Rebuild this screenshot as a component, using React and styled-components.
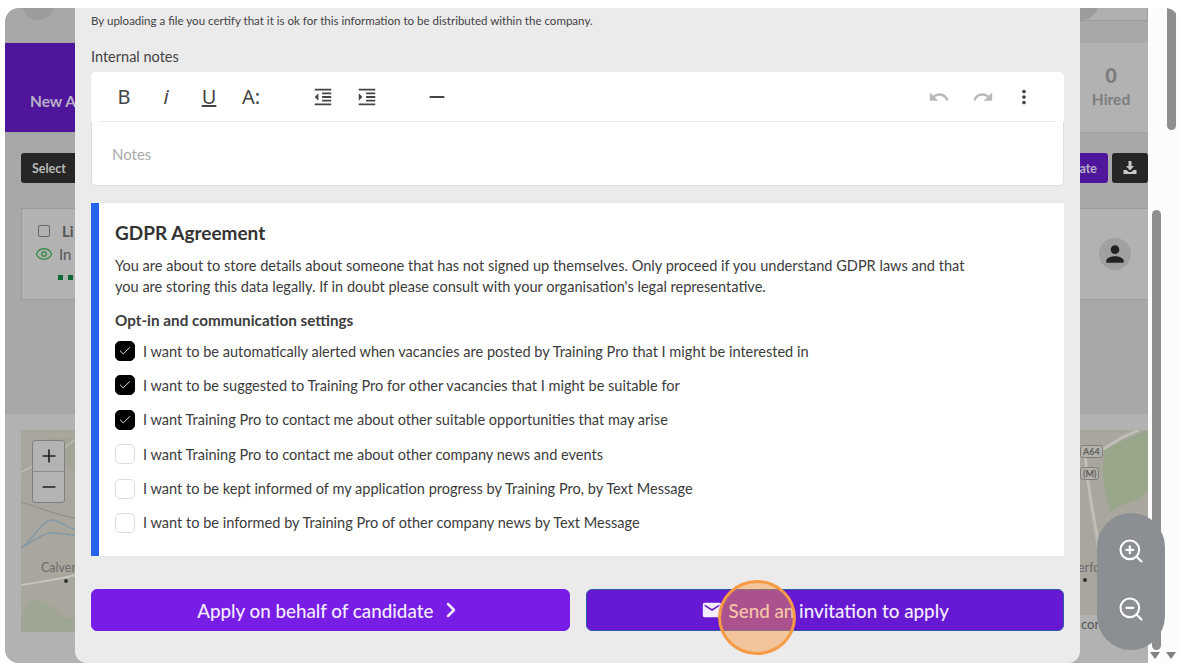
import React from 'react'
import styled, { createGlobalStyle } from 'styled-components'
import { Check, ChevronRight, Eye, Minus, Plus, ZoomIn, ZoomOut } from 'lucide-react'
import { MdEmail, MdFormatIndentDecrease, MdFormatIndentIncrease, MdHorizontalRule, MdMoreVert, MdPerson, MdRedo, MdUndo } from 'react-icons/md'

const GlobalStyle = createGlobalStyle`
  html, body { margin: 0; height: 100%; background: #fff; overflow: hidden; }
  body { font-family: Lato, "Noto Sans", sans-serif; color: #333; }
`

const options = [
  { label: 'I want to be automatically alerted when vacancies are posted by Training Pro that I might be interested in', on: true },
  { label: 'I want to be suggested to Training Pro for other vacancies that I might be suitable for', on: true },
  { label: 'I want Training Pro to contact me about other suitable opportunities that may arise', on: true },
  { label: 'I want Training Pro to contact me about other company news and events', on: false },
  { label: 'I want to be kept informed of my application progress by Training Pro, by Text Message', on: false },
  { label: 'I want to be informed by Training Pro of other company news by Text Message', on: false },
]

const Screen = styled.div`
  height: 672px;
  padding: 8px 14px 9px 5px;
  box-sizing: border-box;
`
const Frame = styled.div`
  position: relative;
  height: 655px;
  display: grid;
  grid-template-columns: 1fr 31px;
  border-radius: 14px;
  overflow: hidden;
`
const Page = styled.div`
  display: flex;
  flex-direction: column;
  background: #a8a8a8;
  min-width: 0;
`
const TopBar = styled.div`
  height: 35px;
  display: flex;
  justify-content: space-between;
  padding: 0 0 0 17px;
  flex: none;
`
const RoundGhost = styled.div`
  width: 32px;
  height: 32px;
  margin-top: -20px;
  border-radius: 50%;
  background: #9c9c9c;
`
const TopBox = styled.div`
  height: 12px;
  width: 130px;
  display: flex;
  justify-content: center;
  background: #b0b0b0;
  border-bottom: 1px solid #9a9a9a;
  border-right: 1px solid #9a9a9a;
  overflow: hidden;
`
const StatsBand = styled.div`
  height: 90px;
  display: flex;
  justify-content: space-between;
  background: #b2b2b2;
  border-bottom: 1px solid #a0a0a0;
  box-sizing: border-box;
  flex: none;
`
const NewTile = styled.div`
  width: 70px;
  background: #4f169b;
  color: #b7b0c6;
  font-weight: 700;
  font-size: 15.5px;
  display: flex;
  align-items: center;
  padding: 27px 0 0 25px;
  box-sizing: border-box;
  white-space: nowrap;
  overflow: hidden;
`
const StatTile = styled.div`
  width: 74px;
  display: flex;
  flex-direction: column;
  align-items: center;
  justify-content: center;
  padding: 0 0 2px 0;
  color: #7d7d7d;
  font-weight: 700;
  font-size: 15.5px;
  line-height: 24px;
  strong { font-size: 20px; }
`
const ActionRow = styled.div`
  height: 75px;
  display: flex;
  align-items: flex-start;
  padding: 20px 0 0 16px;
  gap: 4px;
  box-sizing: border-box;
  flex: none;
`
const DarkButton = styled.div`
  height: 30px;
  width: ${({ $w }) => $w}px;
  background: #262626;
  color: #b9b9b9;
  font-size: 12.5px;
  font-weight: 700;
  border-radius: 3px;
  display: flex;
  align-items: center;
  justify-content: ${({ $start }) => ($start ? 'flex-start' : 'center')};
  padding-left: ${({ $start }) => ($start ? 11 : 0)}px;
  box-sizing: border-box;
  white-space: nowrap;
  overflow: hidden;
`
const PurpleButton = styled(DarkButton)`
  margin-left: auto;
  background: #4f169b;
  color: #b7b0c6;
  justify-content: flex-end;
  padding-right: 11px;
`
const Row = styled.div`
  margin-left: 16px;
  height: 92px;
  flex: none;
  display: flex;
  justify-content: space-between;
  background: #b2b2b2;
  border: 1px solid #9c9c9c;
  border-right: 0;
  box-sizing: border-box;
  padding: 13px 17px 0 13px;
  color: #555;
  font-size: 15px;
`
const RowInfo = styled.div`
  display: flex;
  flex-direction: column;
  gap: 5px;
`
const RowLine = styled.div`
  display: flex;
  align-items: center;
  gap: 6px;
  height: 18px;
`
const SmallCheck = styled.span`
  width: 10px;
  height: 10px;
  border: 1px solid #666;
  border-radius: 2px;
  margin-left: 3px;
  margin-right: 6px;
`
const Dots = styled.div`
  display: flex;
  gap: 5px;
  margin: 7px 0 0 23px;
  span { width: 5px; height: 5px; background: #0c6a35; }
`
const Avatar = styled.div`
  width: 32px;
  height: 32px;
  margin-top: 16px;
  border-radius: 50%;
  background: #a0a0a0;
  color: #222;
  display: flex;
  align-items: center;
  justify-content: center;
`
const Gap = styled.div`
  height: 113px;
  flex: none;
`
const MapSection = styled.div`
  flex: 1;
  background: #b2b2b2;
  border-top: 1px solid #a6a6a6;
  padding: 16px 0 31px 16px;
  display: flex;
  min-height: 0;
`
const MapArea = styled.div`
  position: relative;
  flex: 1;
  background: #a9a69e;
  overflow: hidden;
  svg { display: block; }
`
const MapLabel = styled.span`
  position: absolute;
  left: ${({ $x }) => $x}px;
  top: ${({ $y }) => $y}px;
  font-size: 12.5px;
  line-height: 14px;
  color: #6a6a6a;
`
const RoadShield = styled.span`
  position: absolute;
  left: ${({ $x }) => $x}px;
  top: ${({ $y }) => $y}px;
  padding: 0 2px;
  font-size: 9px;
  line-height: 11px;
  font-weight: 700;
  color: #5e5e5e;
  background: #b3b1aa;
  border: 1px solid #807f7b;
  border-radius: 3px;
`
const MapFooter = styled.span`
  position: absolute;
  right: 0;
  bottom: 0;
  width: 68px;
  height: 17px;
  padding-left: 1px;
  box-sizing: border-box;
  background: #b2b2b2;
  font-size: 13px;
  line-height: 18px;
  color: #555;
`
const ZoomBox = styled.div`
  position: absolute;
  left: 11px;
  top: 10px;
  width: 31px;
  border: 1px solid #7f7f7f;
  border-radius: 3px;
  background: #b3b3b3;
  color: #222;
  button {
    all: unset;
    height: 30px;
    width: 31px;
    display: flex;
    align-items: center;
    justify-content: center;
  }
  button + button { border-top: 1px solid #8d8d8d; }
`
const Rail = styled.div`
  position: relative;
  background: #fcfcfc;
`
const Thumb = styled.div`
  position: absolute;
  left: ${({ $x }) => $x}px;
  top: ${({ $t }) => $t}px;
  width: 9px;
  height: ${({ $h }) => $h}px;
  background: #8e8e8e;
  border-radius: 5px;
`
const Arrow = styled.div`
  position: absolute;
  left: ${({ $x }) => $x}px;
  bottom: 4px;
  border-left: 5px solid transparent;
  border-right: 5px solid transparent;
  border-top: 7px solid #808080;
`
const Modal = styled.div`
  position: absolute;
  left: 70px;
  top: 0;
  width: 1005px;
  height: 655px;
  box-sizing: border-box;
  padding: 0 16px;
  background: #ebebeb;
  border-radius: 0 0 12px 12px;
  overflow: hidden;
`
const Hint = styled.p`
  margin: 5px 0 0;
  font-size: 11.55px;
  line-height: 16px;
  color: #444;
`
const FieldLabel = styled.div`
  margin-top: 18px;
  font-size: 14.5px;
  line-height: 20px;
  color: #444;
`
const Editor = styled.div`
  margin-top: 5px;
`
const Toolbar = styled.div`
  height: 50px;
  background: #fff;
  border-radius: 5px 5px 0 0;
  padding: 0 29px 0 22px;
  display: flex;
  align-items: center;
  color: #444;
  position: relative;
  box-sizing: border-box;
  &::after {
    content: "";
    position: absolute;
    left: 9px;
    right: 9px;
    bottom: 0;
    height: 1px;
    background: #e8e8e8;
  }
`
const ToolGlyph = styled.span`
  width: ${({ $w }) => $w || 22}px;
  margin-right: ${({ $mr }) => $mr || 0}px;
  font-family: "Noto Sans", sans-serif;
  font-size: 20px;
  line-height: 22px;
  text-align: center;
  color: ${({ $muted }) => ($muted ? '#b8b8b8' : '#444')};
  font-style: ${({ $italic }) => ($italic ? 'italic' : 'normal')};
  text-decoration: ${({ $under }) => ($under ? 'underline' : 'none')};
  display: inline-flex;
  justify-content: center;
  align-items: center;
`
const Spacer = styled.div`
  flex: 1;
`
const NotesArea = styled.div`
  height: 64px;
  background: #fff;
  border: 1px solid #ddd;
  border-top: 0;
  border-radius: 0 0 5px 5px;
  box-sizing: border-box;
  padding: 22px 20px 0;
  font-size: 15px;
  line-height: 20px;
  color: #aaa;
`
const Card = styled.section`
  margin-top: 17px;
  height: 353px;
  background: #fff;
  border-left: 8px solid #2563eb;
  box-sizing: border-box;
  padding: 18px 16px 0;
  color: #3c3c3c;
`
const CardTitle = styled.h2`
  margin: 0;
  font-size: 19px;
  line-height: 24px;
  font-weight: 700;
  color: #333;
`
const CardText = styled.p`
  margin: 10px 0 0;
  width: 860px;
  font-size: 14.56px;
  line-height: 21px;
`
const CardSub = styled.h3`
  margin: 13px 0 0;
  font-size: 15.25px;
  line-height: 21px;
  font-weight: 700;
  color: #3c3c3c;
`
const OptionList = styled.div`
  margin-top: 10px;
  display: flex;
  flex-direction: column;
  gap: 14.4px;
`
const Option = styled.label`
  display: flex;
  align-items: center;
  gap: 8px;
  height: 20px;
  font-size: 14.56px;
  white-space: nowrap;
`
const Box = styled.span`
  width: 20px;
  height: 20px;
  box-sizing: border-box;
  border-radius: 5px;
  background: ${({ $on }) => ($on ? '#000' : '#fff')};
  border: 1px solid ${({ $on }) => ($on ? '#000' : '#ddd')};
  color: #fff;
  display: flex;
  align-items: center;
  justify-content: center;
`
const Buttons = styled.div`
  margin-top: 33px;
  display: grid;
  grid-template-columns: 1fr 1fr;
  gap: 16px;
`
const BigButton = styled.button`
  height: 42px;
  border-radius: 6px;
  border: 1px solid ${({ $dark }) => ($dark ? '#2d5aa8' : '#771de6')};
  background: ${({ $dark }) => ($dark ? '#6618d2' : '#771de6')};
  color: #f3ecff;
  font-family: inherit;
  font-size: 18.8px;
  font-weight: 500;
  display: flex;
  align-items: center;
  justify-content: center;
  gap: 6px;
`
const ZoomPill = styled.div`
  position: absolute;
  left: 1092px;
  top: 505px;
  width: 68px;
  height: 137px;
  border-radius: 34px;
  background: #8b8e93;
  color: #fff;
  display: flex;
  flex-direction: column;
  align-items: center;
  justify-content: center;
  gap: 30px;
  padding-bottom: 3px;
  box-sizing: border-box;
`
const ClickMark = styled.div`
  position: absolute;
  left: 713px;
  top: 572px;
  width: 78px;
  height: 75px;
  box-sizing: border-box;
  border-radius: 50%;
  border: 3px solid #f79a45;
  background: rgba(252, 150, 60, 0.45);
`

const DownloadIcon = () => (
  <svg width="16" height="16" viewBox="0 0 16 16" fill="#c9c9c9">
    <path d="M6.5 1h3v5h2.5L8 10.5 4 6h2.5z" />
    <path d="M1.5 10h3l2 2h3l2-2h3v4h-13z" />
  </svg>
)

const MapDrawing = () => (
  <svg width="1127" height="202" viewBox="0 0 1127 202" fill="none">
    <path d="M8 172 C18 165 35 178 40 186 L54 190 V202 H0 V185Z" fill="#98a68a" opacity="0.55" />
    <path d="M22 10 C40 5 50 8 54 10 V40 C40 35 30 25 22 10Z" fill="#98a68a" opacity="0.4" />
    <path d="M1084 18 C1100 12 1115 5 1127 0 V60 C1115 75 1105 70 1090 82 C1082 60 1080 35 1084 18Z" fill="#98a68a" />
    <path d="M1092 120 C1100 140 1102 165 1096 185 L1090 185 C1092 160 1092 140 1092 120Z" fill="#98a68a" opacity="0.7" />
    <path d="M0 42 C15 35 35 25 54 10" stroke="#bdbcb5" strokeWidth="1.5" />
    <path d="M0 72 C20 78 35 85 54 88" stroke="#8b8a84" strokeWidth="1" />
    <path d="M0 118 C12 110 20 92 29 90 C38 90 46 97 54 100" stroke="#8299aa" strokeWidth="1.5" />
    <path d="M0 118 C12 112 20 104 29 103 C38 103 46 105 54 105" stroke="#8299aa" strokeWidth="1.5" />
    <path d="M0 155 C18 152 36 150 54 145" stroke="#c6c5bf" strokeWidth="2" />
    <path d="M1059 24 C1072 26 1085 18 1100 8 L1118 0" stroke="#c0bfb9" strokeWidth="3" />
    <path d="M1064 20 C1066 60 1074 90 1080 130 L1086 185" stroke="#c0bfb9" strokeWidth="3" />
    <path d="M1072 90 L1090 202" stroke="#b6b5ae" strokeWidth="1.5" />
    <circle cx="45" cy="151" r="2" fill="#333" />
    <circle cx="1064" cy="150" r="2" fill="#333" />
  </svg>
)

const App = () => {
  return (
    <>
      <GlobalStyle />
      <Screen>
        <Frame>
          <Page>
            <TopBar>
              <RoundGhost />
              <TopBox><RoundGhost /></TopBox>
            </TopBar>
            <StatsBand>
              <NewTile>New Applicants</NewTile>
              <StatTile><strong>0</strong>Hired</StatTile>
            </StatsBand>
            <ActionRow>
              <DarkButton $w={80} $start>Select</DarkButton>
              <PurpleButton $w={90}>ate</PurpleButton>
              <DarkButton $w={36}><DownloadIcon /></DarkButton>
            </ActionRow>
            <Row>
              <RowInfo>
                <RowLine><SmallCheck /><b>Li</b></RowLine>
                <RowLine><Eye size={18} color="#3f8f4f" />In</RowLine>
                <Dots><span /><span /></Dots>
              </RowInfo>
              <Avatar><MdPerson size={26} /></Avatar>
            </Row>
            <Gap />
            <MapSection>
              <MapArea>
                <MapDrawing />
                <MapLabel $x={20} $y={131}>Calver</MapLabel>
                <MapLabel $x={1057} $y={131}>erfc</MapLabel>
                <RoadShield $x={1059} $y={15}>A64</RoadShield>
                <RoadShield $x={1059} $y={37}>(M)</RoadShield>
                <MapFooter>cor</MapFooter>
                <ZoomBox>
                  <button><Plus size={20} /></button>
                  <button><Minus size={20} /></button>
                </ZoomBox>
              </MapArea>
            </MapSection>
          </Page>
          <Rail>
            <Thumb $x={19} $t={-6} $h={128} />
            <Thumb $x={4} $t={202} $h={440} />
            <Arrow $x={2} />
            <Arrow $x={18} />
          </Rail>
          <Modal>
            <Hint>By uploading a file you certify that it is ok for this information to be distributed within the company.</Hint>
            <FieldLabel>Internal notes</FieldLabel>
            <Editor>
              <Toolbar>
                <ToolGlyph $mr={20}>B</ToolGlyph>
                <ToolGlyph $mr={21} $italic>i</ToolGlyph>
                <ToolGlyph $mr={20} $under>U</ToolGlyph>
                <ToolGlyph $mr={50}>A:</ToolGlyph>
                <ToolGlyph $mr={22}><MdFormatIndentDecrease size={24} /></ToolGlyph>
                <ToolGlyph $mr={48}><MdFormatIndentIncrease size={24} /></ToolGlyph>
                <ToolGlyph><MdHorizontalRule size={22} /></ToolGlyph>
                <Spacer />
                <ToolGlyph $mr={22} $muted><MdUndo size={22} /></ToolGlyph>
                <ToolGlyph $mr={19} $muted><MdRedo size={22} /></ToolGlyph>
                <ToolGlyph><MdMoreVert size={22} /></ToolGlyph>
              </Toolbar>
              <NotesArea>Notes</NotesArea>
            </Editor>
            <Card>
              <CardTitle>GDPR Agreement</CardTitle>
              <CardText>You are about to store details about someone that has not signed up themselves. Only proceed if you understand GDPR laws and that you are storing this data legally. If in doubt please consult with your organisation's legal representative.</CardText>
              <CardSub>Opt-in and communication settings</CardSub>
              <OptionList>
                {options.map((opt) => (
                  <Option key={opt.label}>
                    <Box $on={opt.on}>{opt.on && <Check size={14} strokeWidth={1.5} />}</Box>
                    {opt.label}
                  </Option>
                ))}
              </OptionList>
            </Card>
            <Buttons>
              <BigButton>Apply on behalf of candidate <ChevronRight size={24} strokeWidth={2.5} /></BigButton>
              <BigButton $dark><MdEmail size={22} />Send an invitation to apply</BigButton>
            </Buttons>
          </Modal>
          <ZoomPill>
            <ZoomIn size={28} strokeWidth={1.8} />
            <ZoomOut size={28} strokeWidth={1.8} />
          </ZoomPill>
          <ClickMark />
        </Frame>
      </Screen>
    </>
  )
}

export default App
